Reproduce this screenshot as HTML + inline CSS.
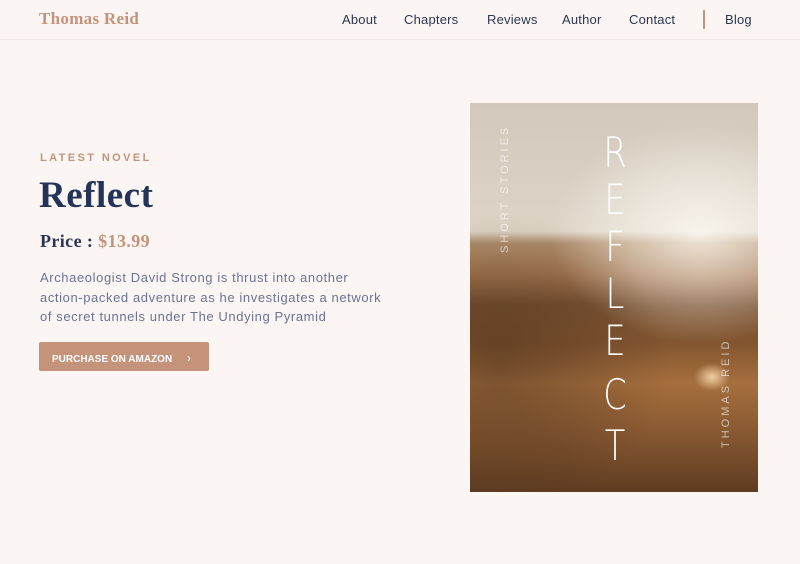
<!DOCTYPE html>
<html><head><meta charset="utf-8"><style>
*{margin:0;padding:0;box-sizing:border-box}
body{width:800px;height:564px;background:#fbf6f3;font-family:"Liberation Sans",sans-serif;position:relative;overflow:hidden}
.hdr{position:absolute;left:0;top:0;width:800px;height:40px;border-bottom:1px solid #f0e9e5}
.logo{position:absolute;left:39px;top:9px;font-family:"Liberation Serif",serif;font-size:17px;font-weight:bold;color:#c4937a;letter-spacing:.3px}
.nav{position:absolute;top:12px;font-size:13px;color:#2b3553;letter-spacing:.2px}
.bar{position:absolute;left:703px;top:10px;width:2px;height:19px;background:#c4937a}
.lbl{position:absolute;left:40px;top:152px;font-size:11px;font-weight:bold;letter-spacing:2.4px;color:#c4937a}
h1{position:absolute;left:39px;top:174px;font-family:"Liberation Serif",serif;font-size:37px;color:#243459;font-weight:bold;letter-spacing:.5px}
.price{position:absolute;left:40px;top:231px;font-family:"Liberation Serif",serif;font-size:18px;font-weight:bold;color:#2b3553;letter-spacing:.4px}
.price span{color:#c4937a}
.desc{position:absolute;left:40px;top:268px;width:380px;font-size:13px;line-height:19.5px;color:#6a7393;letter-spacing:.6px;white-space:nowrap}
.btn{position:absolute;left:39px;top:342px;width:170px;height:29px;background:#c4937a;border-radius:2px;color:#fff;font-size:10px;font-weight:bold;padding:9px 0 0 13px}
.cover{position:absolute;left:470px;top:103px;width:288px;height:389px;overflow:hidden;
background:linear-gradient(180deg,#d2c8bb 0%,#dbd2c5 25%,#ddd4c6 33%,#b08e6c 36%,#a27550 44%,#7a5232 52%,#845630 62%,#a56f3e 72%,#8a5a32 84%,#5e3c22 100%)}
.glow{position:absolute;left:0;top:0;width:288px;height:389px}
</style></head><body>
<div class="hdr">
<div class="logo">Thomas Reid</div>
<div class="nav" style="left:342px">About</div>
<div class="nav" style="left:404px">Chapters</div>
<div class="nav" style="left:487px">Reviews</div>
<div class="nav" style="left:562px">Author</div>
<div class="nav" style="left:629px">Contact</div>
<div class="bar"></div>
<div class="nav" style="left:725px">Blog</div>
</div>
<div class="lbl">LATEST NOVEL</div>
<h1>Reflect</h1>
<div class="price">Price : <span>$13.99</span></div>
<div class="desc">Archaeologist David Strong is thrust into another<br>action-packed adventure as he investigates a network<br>of secret tunnels under The Undying Pyramid</div>
<div class="btn">PURCHASE ON AMAZON <span style="margin-left:12px;font-weight:normal;font-size:12px">&#8250;</span></div>
<div class="cover">
<div class="glow" style="background:radial-gradient(ellipse 150px 110px at 230px 130px,rgba(255,252,245,.8),rgba(255,250,240,0))"></div>
<div class="glow" style="background:radial-gradient(ellipse 170px 150px at 30px 260px,rgba(40,25,15,.35),rgba(0,0,0,0))"></div>
<div class="glow" style="background:radial-gradient(ellipse 18px 14px at 242px 274px,rgba(255,225,180,.85),rgba(255,220,170,0))"></div>
<svg width="288" height="389" style="position:absolute;left:0;top:0">
<text x="38" y="150" transform="rotate(-90 38 150)" fill="rgba(255,255,255,.6)" font-size="11" letter-spacing="3" font-family="Liberation Sans">SHORT STORIES</text>
<text x="259" y="345" transform="rotate(-90 259 345)" fill="rgba(255,255,255,.6)" font-size="11" letter-spacing="3" font-family="Liberation Sans">THOMAS REID</text>
<g fill="#fff" font-family="DejaVu Sans" font-weight="200" font-size="42" text-anchor="middle" transform="translate(145 0) scale(.8 1)">
<text x="0" y="64">R</text><text x="0" y="111">E</text><text x="0" y="158">F</text><text x="0" y="205">L</text><text x="0" y="252">E</text><text x="0" y="306">C</text><text x="0" y="357">T</text>
</g>
</svg>
</div>
</body></html>
